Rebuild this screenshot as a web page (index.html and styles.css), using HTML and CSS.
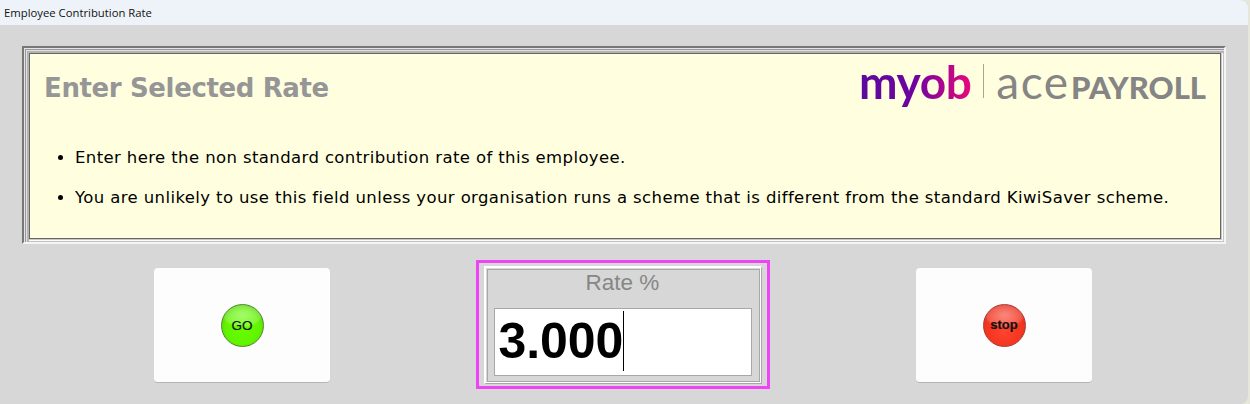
FILE: index.html
```html
<!DOCTYPE html>
<html lang="en">
<head>
<meta charset="utf-8">
<title>Employee Contribution Rate</title>
<link rel="stylesheet" href="styles.css">
</head>
<body>
<div class="window">
  <header class="titlebar">Employee Contribution Rate</header>
  <main class="content">
    <section class="panel">
      <div class="panel-inner">
        <div class="panel-head">
          <h1 class="heading">Enter Selected Rate</h1>
          <div class="logo">
            <span class="logo-myob">myob</span>
            <span class="logo-rule"></span>
            <span class="logo-ace">ace</span>
            <span class="logo-payroll">PAYROLL</span>
          </div>
        </div>
        <ul class="notes">
          <li>Enter here the non standard contribution rate of this employee.</li>
          <li>You are unlikely to use this field unless your organisation runs a scheme that is different from the standard KiwiSaver scheme.</li>
        </ul>
      </div>
    </section>
    <section class="actions">
      <button class="action" type="button"><span class="orb orb-go">GO</span></button>
      <div class="rate-highlight">
        <div class="rate-box">
          <div class="rate-inner">
            <div class="rate-label">Rate %</div>
            <div class="rate-field"><span class="rate-value">3.000</span><span class="caret"></span></div>
          </div>
        </div>
      </div>
      <button class="action" type="button"><span class="orb orb-stop">stop</span></button>
    </section>
  </main>
</div>
</body>
</html>
```
FILE: styles.css
```css
* { box-sizing: border-box; }
html, body { margin: 0; padding: 0; }
body { width: 1250px; height: 404px; background: #e6e6da; overflow: hidden; }
.window {
  width: 1248px; height: 404px; background: #d7d7d7;
  border-radius: 0 8px 8px 0; overflow: hidden;
  display: flex; flex-direction: column;
}
.titlebar {
  height: 25px; background: #eef3f9; padding: 5px 0 0 4px;
  font: 11.3px/16px "Open Sans", "Noto Sans", sans-serif; color: #111;
}
.content { padding: 21px 0 0 22px; }
.panel {
  width: 1204px; height: 198px;
  border: 2px solid #777; border-right-color: #f4f4f4; border-bottom-color: #f4f4f4;
  padding: 5px 3px 3px 5px; background: #d7d7d7;
  box-shadow:
    inset 1px 1px 0 #e4e4e4, inset 2px 2px 0 #999, inset 3px 3px 0 #e0e0e0, inset 5px 5px 0 #b4b4b4,
    inset -1px -1px 0 #c4c4c4, inset -2px -2px 0 #fafafa, inset -3px -3px 0 #c8c8c8;
}
.panel-inner {
  height: 100%;
  background: #ffffdf; border: 1px solid #666;
  padding: 0 14px;
}
.panel-head { display: flex; justify-content: space-between; align-items: flex-start; height: 94px; }
.heading {
  margin: 19px 0 0 0; font: bold 26px/30px "DejaVu Sans", Verdana, sans-serif;
  color: #969696; letter-spacing: -0.37px;
}
.logo { display: flex; align-items: baseline; margin: 0; height: 50px; }
.logo-myob {
  font: bold 46px/56px Lato, sans-serif; letter-spacing: -0.4px;
  background: linear-gradient(90deg, #5a0a9e 0%, #6d049f 50%, #e8087e 100%);
  -webkit-background-clip: text; background-clip: text; color: transparent;
}
.logo-rule { width: 1px; height: 34px; background: #a8a88c; margin: 10px 12px 0 12px; align-self: flex-start; }
.logo-ace { font: 400 46px/56px Lato, sans-serif; color: #858585; letter-spacing: 1.5px; }
.logo-payroll { font: 900 31px/56px Lato, sans-serif; color: #858585; margin-left: 1.5px; }
.notes {
  margin: 0; padding: 0 0 0 31px; list-style: disc;
  font: 16.5px/20px "DejaVu Sans", Verdana, sans-serif; color: #000; letter-spacing: 0.39px;
}
.notes li { margin-bottom: 20px; }
.actions { display: flex; margin: 16px 0 0 132px; align-items: flex-start; }
.action {
  width: 176px; height: 115px; margin-top: 8px; background: #fdfdfd;
  border: 0; border-bottom: 1px solid #b5b5b5; border-radius: 4px; padding: 0;
  display: flex; align-items: center; justify-content: center; cursor: pointer;
}
.orb {
  width: 43px; height: 43px; border-radius: 50%;
  display: flex; align-items: center; justify-content: center;
  font-family: "Liberation Sans", Arial, sans-serif; font-size: 13px; color: #111;
}
.orb-go {
  background:
    radial-gradient(ellipse 50% 32% at 50% 24%, rgba(255,255,255,.42) 0, rgba(255,255,255,.2) 85%, transparent 100%),
    radial-gradient(circle at 50% 55%, #66ff00 0%, #62f400 55%, #58c810 85%, #458f1c 100%);
  border: 1px solid #4b8a2a; font-size: 13.5px;
}
.orb-go, .orb-stop { -webkit-text-stroke: 0.2px #111; }
.orb-stop {
  background:
    radial-gradient(ellipse 50% 32% at 50% 24%, rgba(255,255,255,.4) 0, rgba(255,255,255,.18) 85%, transparent 100%),
    radial-gradient(circle at 50% 60%, #ff4530 0%, #f43520 55%, #df2c1e 85%, #b5302a 100%);
  border: 1px solid #a83a34; font-weight: bold; padding-bottom: 2px;
}
.rate-highlight {
  width: 294px; height: 129px; margin: 0 146px;
  border: 3px solid #ef44f5; padding: 3px 5px 2px;
}
.rate-box {
  height: 100%; padding: 1px;
  border-style: solid; border-width: 2px 1px 1px 2px;
  border-color: #fff #a8a8a8 #a8a8a8 #fff;
  box-shadow: inset -1px -1px 0 #fff;
}
.rate-inner {
  height: 100%; border: 1px solid #a8a8a8; padding-right: 2px;
  display: flex; flex-direction: column; align-items: center;
}
.rate-label { font: 22.5px/26px "Liberation Sans", Arial, sans-serif; color: #868686; height: 38px; }
.rate-field {
  width: 258px; height: 68px; background: #fff; border: 1px solid #a8a8a8;
  display: flex; align-items: flex-start; padding-left: 4px;
}
.rate-value { font: bold 50px/64px "Liberation Sans", Arial, sans-serif; color: #000; letter-spacing: -0.1px; }
.caret { width: 1px; height: 60px; background: #000; margin: 2px 0 0 -0.5px; }
```
